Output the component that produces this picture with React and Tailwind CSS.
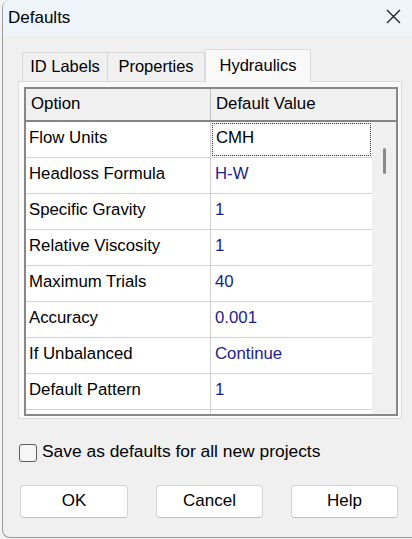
import React from "react";

const rows = [
  ["Flow Units", "CMH"],
  ["Headloss Formula", "H-W"],
  ["Specific Gravity", "1"],
  ["Relative Viscosity", "1"],
  ["Maximum Trials", "40"],
  ["Accuracy", "0.001"],
  ["If Unbalanced", "Continue"],
  ["Default Pattern", "1"],
  ["", ""],
];

export default function App() {
  return (
    <div className="w-[412px] h-[539px] bg-[#f4f4f4] font-['Liberation_Sans',Arial,sans-serif] text-black">
      <div className="ml-[2px] h-[538px] flex flex-col border-l border-b border-[#9a9a9a] rounded-l-lg bg-[#f0f0f0] overflow-hidden">
        {/* TITLE BAR */}
        <div className="h-[36px] shrink-0 flex items-center justify-between pl-[5px] pr-[11px] bg-[#eef4f9]">
          <span className="text-[17px] leading-none pb-[2px]">Defaults</span>
          <svg width="15" height="15" viewBox="0 0 15 15" className="mb-[3px]">
            <path d="M1 1L14 14M14 1L1 14" stroke="#1a1a1a" strokeWidth="1.2" fill="none" />
          </svg>
        </div>

        {/* TABS */}
        <div className="mt-[13px] ml-[19px] flex items-end h-[32px] text-[16.5px] leading-none">
          <Tab label="ID Labels" width="w-[86px]" />
          <Tab label="Properties" width="w-[97px]" noLeft />
          <div className="relative z-10 -mb-px w-[106px] h-[33px] flex justify-center pt-[7px] bg-[#f9f9f9] border-t border-l border-r border-[#dedede]">
            Hydraulics
          </div>
        </div>

        {/* TAB PAGE */}
        <div className="ml-[15px] w-[384px] h-[338px] shrink-0 border border-[#dcdcdc] bg-[#f9f9f9] pl-[5px] pt-[5px]">
          <div className="w-[374px] h-[329px] flex flex-col border-2 border-[#888888] bg-white text-[16.8px] leading-none">
            {/* header */}
            <div className="h-[33px] shrink-0 flex bg-[#f0f0f0] border-b-2 border-[#858585]">
              <div className="w-[185px] flex items-center pl-[5px] border-r border-[#c4c4c4]">Option</div>
              <div className="flex-1 flex items-center pl-[5px]">Default Value</div>
            </div>
            {/* body */}
            <div className="flex-1 flex overflow-hidden">
              <div className="w-[346px] overflow-hidden">
                {rows.map(([opt, val], i) => (
                  <div key={i} className="h-[36px] flex border-b border-[#d2d2d2]">
                    <div className="w-[185px] shrink-0 flex items-center pl-[3px] pb-[3px] border-r border-[#cfcfcf]">{opt}</div>
                    {i === 0 ? (
                      <div className="flex-1 flex p-px">
                        <div className="flex-1 flex items-center pl-[3px] pb-[2px] border border-dotted border-[#303030]">{val}</div>
                      </div>
                    ) : (
                      <div className="flex-1 flex items-center pl-[4px] pb-[3px] text-[#1c1c8a]">{val}</div>
                    )}
                  </div>
                ))}
              </div>
              {/* scrollbar */}
              <div className="flex-1 flex justify-center pt-[26px] bg-[#f0f0f0]">
                <div className="w-[3px] h-[26px] rounded-full bg-[#8a8a8a]" />
              </div>
            </div>
          </div>
        </div>

        {/* CHECKBOX */}
        <label className="mt-[24px] ml-[16px] flex items-center gap-[5px] text-[17.4px] leading-none">
          <span className="w-[18px] h-[18px] rounded-[3px] border border-[#5c5c5c] bg-[#f6f6f6]" />
          <span className="pb-[2px]">Save as defaults for all new projects</span>
        </label>

        {/* BUTTONS */}
        <div className="mt-[23px] ml-[17px] flex gap-[28px] text-[17px] leading-none">
          <Button label="OK" width="w-[108px]" />
          <Button label="Cancel" width="w-[107px]" />
          <Button label="Help" width="w-[107px]" />
        </div>
      </div>
    </div>
  );
}

function Tab({ label, width, noLeft }) {
  return (
    <div className={`${width} h-[29px] flex items-center justify-center pb-[2px] bg-[#f0f0f0] border-t border-r ${noLeft ? "" : "border-l"} border-[#d9d9d9]`}>
      {label}
    </div>
  );
}

function Button({ label, width }) {
  return (
    <button className={`${width} h-[33px] flex items-center justify-center pb-[2px] bg-white border border-[#d3d3d3] border-b-[#c0c0c0] rounded-[4px]`}>
      {label}
    </button>
  );
}
